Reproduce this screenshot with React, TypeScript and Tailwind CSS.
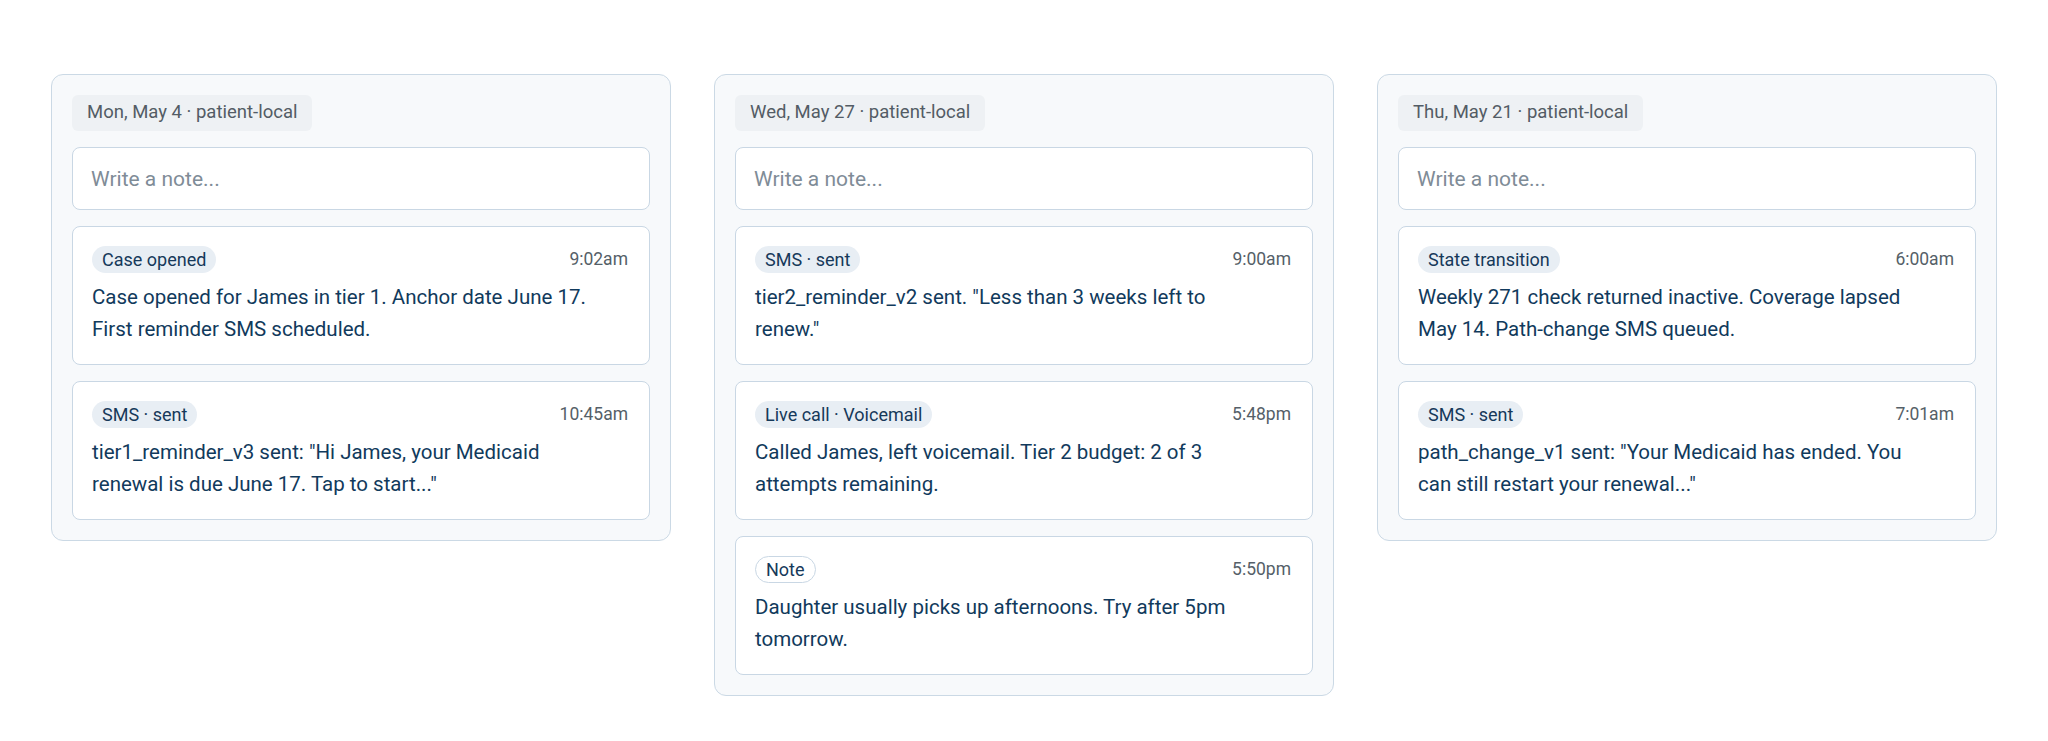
import React from 'react';

interface TimelineEntry {
  id: string;
  tag: string;
  time: string;
  lines: string[];
  outlined?: boolean;
}

interface DayColumn {
  id: string;
  label: string;
  entries: TimelineEntry[];
}

// body text is kept as the wrapped lines shown in the design
const columns: DayColumn[] = [
  {
    id: 'may-4',
    label: 'Mon, May 4 · patient-local',
    entries: [
      {
        id: 'e1',
        tag: 'Case opened',
        time: '9:02am',
        lines: ['Case opened for James in tier 1. Anchor date June 17.', 'First reminder SMS scheduled.'],
      },
      {
        id: 'e2',
        tag: 'SMS · sent',
        time: '10:45am',
        lines: ['tier1_reminder_v3 sent: "Hi James, your Medicaid', 'renewal is due June 17. Tap to start..."'],
      },
    ],
  },
  {
    id: 'may-27',
    label: 'Wed, May 27 · patient-local',
    entries: [
      {
        id: 'e3',
        tag: 'SMS · sent',
        time: '9:00am',
        lines: ['tier2_reminder_v2 sent. "Less than 3 weeks left to', 'renew."'],
      },
      {
        id: 'e4',
        tag: 'Live call · Voicemail',
        time: '5:48pm',
        lines: ['Called James, left voicemail. Tier 2 budget: 2 of 3', 'attempts remaining.'],
      },
      {
        id: 'e5',
        tag: 'Note',
        time: '5:50pm',
        lines: ['Daughter usually picks up afternoons. Try after 5pm', 'tomorrow.'],
        outlined: true,
      },
    ],
  },
  {
    id: 'may-21',
    label: 'Thu, May 21 · patient-local',
    entries: [
      {
        id: 'e6',
        tag: 'State transition',
        time: '6:00am',
        lines: ['Weekly 271 check returned inactive. Coverage lapsed', 'May 14. Path-change SMS queued.'],
      },
      {
        id: 'e7',
        tag: 'SMS · sent',
        time: '7:01am',
        lines: ['path_change_v1 sent: "Your Medicaid has ended. You', 'can still restart your renewal..."'],
      },
    ],
  },
];

function EntryCard({ entry }: { entry: TimelineEntry }) {
  return (
    <div className="bg-white border border-[#c9d7e4] rounded-lg px-[19px] pt-[19px] pb-[19px]">
      <div className="flex items-center justify-between">
        <span
          className={`rounded-full px-[10px] h-[27px] flex items-center text-[18px] text-[#16395a] ${
            entry.outlined ? 'bg-white border border-[#c9d7e4]' : 'bg-[#e8eef4]'
          }`}
        >
          {entry.tag}
        </span>
        <span className="text-[17.5px] text-[#555f68] mr-[2px]">{entry.time}</span>
      </div>
      <p className="mt-2 text-[20.5px] leading-[32px] text-[#113a5c]">
        {entry.lines.map((line) => (
          <span key={line} className="block whitespace-nowrap">
            {line}
          </span>
        ))}
      </p>
    </div>
  );
}

function Column({ column }: { column: DayColumn }) {
  return (
    <div className="bg-[#f7f9fb] border border-[#cbd9e5] rounded-xl p-5 flex flex-col gap-4">
      <div className="self-start bg-[#eef1f4] rounded-md px-[15px] h-[36px] flex items-center text-[18.5px] text-[#535c65]">
        {column.label}
      </div>
      <input
        type="text"
        placeholder="Write a note..."
        className="w-full h-[63px] bg-white border border-[#c9d7e4] rounded-lg px-[18px] text-[21px] text-[#113a5c] placeholder:text-[#7f8c97] outline-none"
      />
      {column.entries.map((entry) => (
        <EntryCard key={entry.id} entry={entry} />
      ))}
    </div>
  );
}

export default function App() {
  return (
    <div
      className="min-h-screen bg-white px-[51px] pt-[74px]"
      style={{ fontFamily: 'Roboto, "Noto Sans", sans-serif' }}
    >
      <div className="grid grid-cols-3 gap-[43px] items-start">
        {columns.map((column) => (
          <Column key={column.id} column={column} />
        ))}
      </div>
    </div>
  );
}
